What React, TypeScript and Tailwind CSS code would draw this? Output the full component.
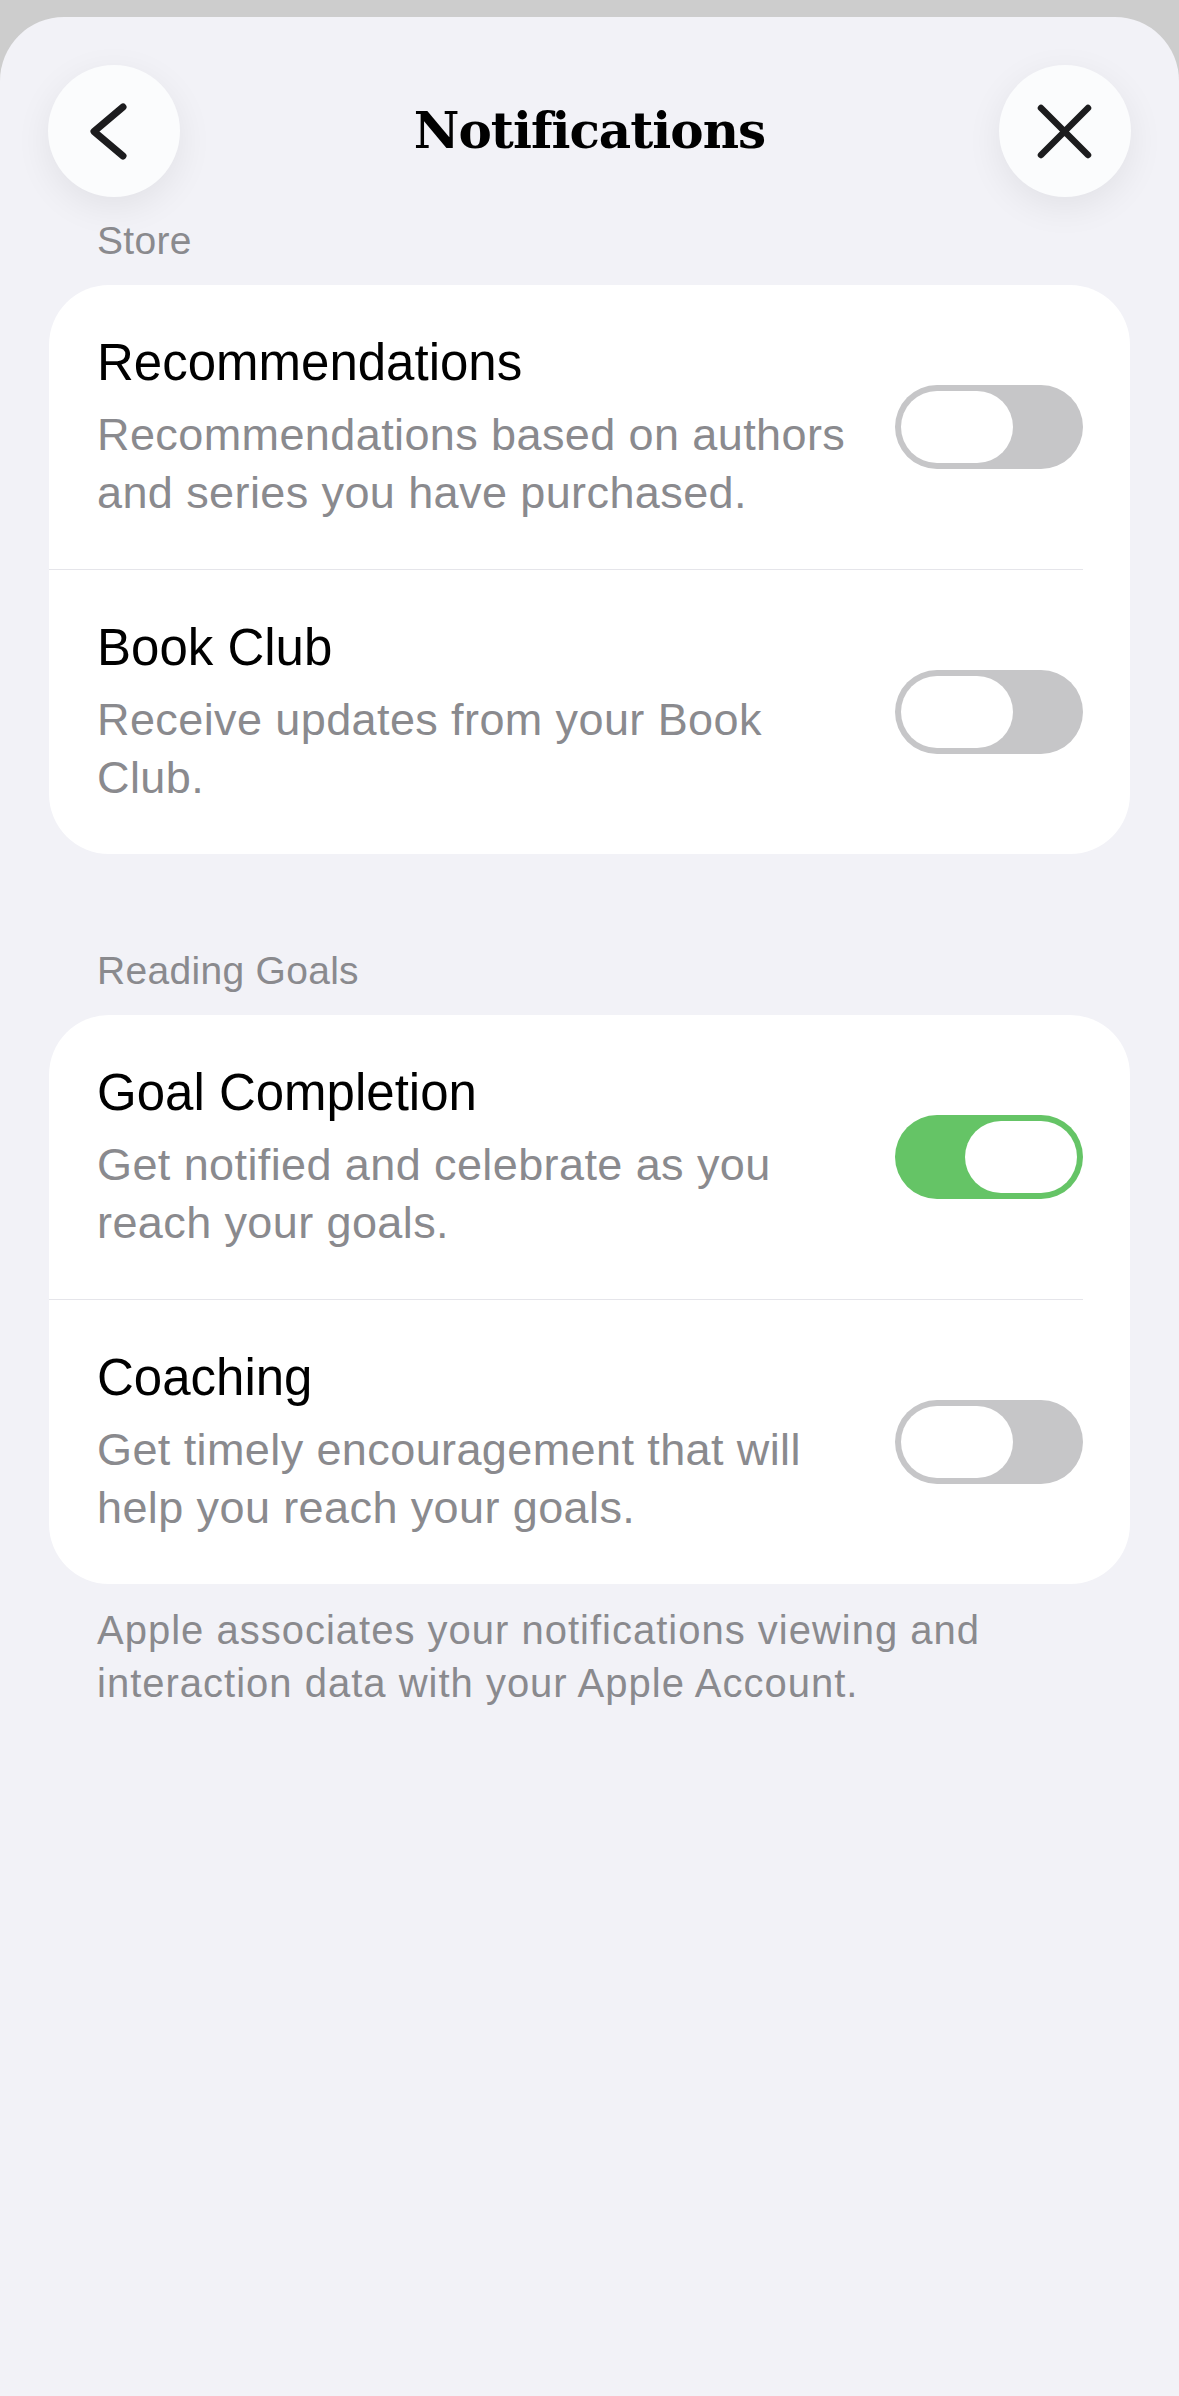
import { useState } from 'react';

type Row = { title: string; description: string; on: boolean };

const store: Row[] = [
  { title: 'Recommendations', description: 'Recommendations based on authors and series you have purchased.', on: false },
  { title: 'Book Club', description: 'Receive updates from your Book Club.', on: false },
];

const goals: Row[] = [
  { title: 'Goal Completion', description: 'Get notified and celebrate as you reach your goals.', on: true },
  { title: 'Coaching', description: 'Get timely encouragement that will help you reach your goals.', on: false },
];

function Toggle({ on, onChange }: { on: boolean; onChange: () => void }) {
  return (
    <button
      onClick={onChange}
      className={`flex h-[84px] w-[188px] shrink-0 items-center rounded-full px-[6px] ${
        on ? 'justify-end bg-[#65c466]' : 'justify-start bg-[#c6c6c8]'
      }`}
    >
      <span className="block h-[72px] w-[112px] rounded-full bg-white" />
    </button>
  );
}

function SettingRow({ row, onToggle }: { row: Row; onToggle: () => void }) {
  return (
    <div className="flex items-center gap-[30px] py-[47px] pl-[48px] pr-[47px]">
      <div className="flex-1">
        <div className="text-[51px] leading-[62px] text-black">{row.title}</div>
        <p className="mt-[12px] text-[45px] leading-[58px] tracking-[0.4px] text-[#8a8a8e]">{row.description}</p>
      </div>
      <Toggle on={row.on} onChange={onToggle} />
    </div>
  );
}

function Section({ label, rows, onToggle }: { label: string; rows: Row[]; onToggle: (i: number) => void }) {
  return (
    <section className="px-[49px]">
      <div className="pl-[48px] text-[39px] leading-[48px] tracking-[0.3px] text-[#8a8a8e]">{label}</div>
      <div className="mt-[20px] overflow-hidden rounded-[60px] bg-white">
        {rows.map((row, i) => (
          <div key={row.title}>
            {i > 0 && <div className="mr-[47px] h-px bg-[#e5e5ea]" />}
            <SettingRow row={row} onToggle={() => onToggle(i)} />
          </div>
        ))}
      </div>
    </section>
  );
}

function CircleButton({ children }: { children: React.ReactNode }) {
  return (
    <button className="flex h-[132px] w-[132px] items-center justify-center rounded-full bg-[#fbfcfd] shadow-[0_10px_36px_rgba(0,0,0,0.07)]">
      {children}
    </button>
  );
}

export default function App() {
  const [storeRows, setStoreRows] = useState(store);
  const [goalRows, setGoalRows] = useState(goals);

  const flip = (rows: Row[], i: number) => rows.map((r, j) => (j === i ? { ...r, on: !r.on } : r));

  return (
    <div className="min-h-[2396px] bg-[#cdcdcd] pt-[17px] font-['Liberation_Sans',Arial,sans-serif]">
      <div className="min-h-[2379px] rounded-t-[64px] bg-[#f2f2f7]">
        <header className="grid grid-cols-[132px_1fr_132px] items-center px-[48px] pt-[48px]">
          <CircleButton>
            <svg width="132" height="132" viewBox="0 0 132 132" fill="none">
              <path d="M75 42 L46 66.5 L75 91" stroke="#1c1c1e" strokeWidth="7" strokeLinecap="round" strokeLinejoin="round" />
            </svg>
          </CircleButton>
          <h1 className="text-center font-['DejaVu_Serif',serif] text-[50px] font-bold leading-[60px] tracking-[-1px] text-black">
            Notifications
          </h1>
          <CircleButton>
            <svg width="132" height="132" viewBox="0 0 132 132" fill="none">
              <path d="M42 43 L89 90 M89 43 L42 90" stroke="#1c1c1e" strokeWidth="6.5" strokeLinecap="round" />
            </svg>
          </CircleButton>
        </header>

        <div className="mt-[20px]">
          <Section label="Store" rows={storeRows} onToggle={(i) => setStoreRows(flip(storeRows, i))} />
        </div>
        <div className="mt-[93px]">
          <Section label="Reading Goals" rows={goalRows} onToggle={(i) => setGoalRows(flip(goalRows, i))} />
        </div>

        <p className="mt-[20px] px-[97px] pr-[60px] text-[40px] leading-[53px] tracking-[1px] text-[#8a8a8e]">
          Apple associates your notifications viewing and interaction data with your Apple Account.
        </p>
      </div>
    </div>
  );
}
